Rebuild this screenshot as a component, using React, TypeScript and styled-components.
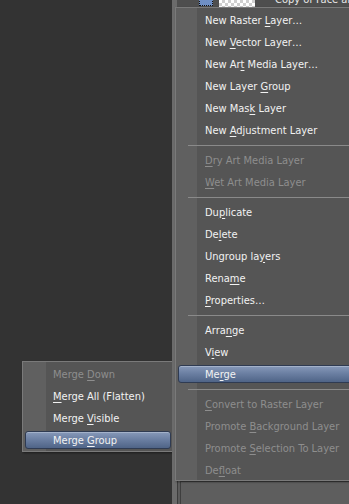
import React from 'react';
import styled, { createGlobalStyle } from 'styled-components';

const GlobalStyle = createGlobalStyle`
  html, body {
    margin: 0;
    padding: 0;
    background: #333333;
    overflow: hidden;
  }
  body {
    font-family: "DejaVu Sans Condensed", "DejaVu Sans", Tahoma, sans-serif;
    font-size: 11px;
  }
`;

type Entry =
  | { kind: 'item'; label: string; key?: number; disabled?: boolean; active?: boolean }
  | { kind: 'sep' };

const mainMenu: Entry[] = [
  { kind: 'item', label: 'New Raster Layer…', key: 11 },
  { kind: 'item', label: 'New Vector Layer…', key: 4 },
  { kind: 'item', label: 'New Art Media Layer…', key: 6 },
  { kind: 'item', label: 'New Layer Group', key: 10 },
  { kind: 'item', label: 'New Mask Layer', key: 7 },
  { kind: 'item', label: 'New Adjustment Layer', key: 4 },
  { kind: 'sep' },
  { kind: 'item', label: 'Dry Art Media Layer', key: 0, disabled: true },
  { kind: 'item', label: 'Wet Art Media Layer', key: 0, disabled: true },
  { kind: 'sep' },
  { kind: 'item', label: 'Duplicate', key: 2 },
  { kind: 'item', label: 'Delete', key: 2 },
  { kind: 'item', label: 'Ungroup layers', key: 10 },
  { kind: 'item', label: 'Rename', key: 4 },
  { kind: 'item', label: 'Properties…', key: 0 },
  { kind: 'sep' },
  { kind: 'item', label: 'Arrange', key: 4 },
  { kind: 'item', label: 'View', key: 1 },
  { kind: 'item', label: 'Merge', key: 2, active: true },
  { kind: 'sep' },
  { kind: 'item', label: 'Convert to Raster Layer', key: 0, disabled: true },
  { kind: 'item', label: 'Promote Background Layer', key: 8, disabled: true },
  { kind: 'item', label: 'Promote Selection To Layer', key: 8, disabled: true },
  { kind: 'item', label: 'Defloat', key: 2, disabled: true },
];

const mergeMenu: Entry[] = [
  { kind: 'item', label: 'Merge Down', key: 6, disabled: true },
  { kind: 'item', label: 'Merge All (Flatten)', key: 0 },
  { kind: 'item', label: 'Merge Visible', key: 6 },
  { kind: 'item', label: 'Merge Group', key: 6, active: true },
];

const Screen = styled.div`
  display: flex;
  width: 349px;
  height: 504px;
  background: #333333;
  overflow: hidden;
`;

const Desk = styled.div`
  position: relative;
  width: 172px;
  flex-shrink: 0;
  background: #333333;
`;

const Panel = styled.div`
  position: relative;
  flex: 1;
  display: flex;
  flex-direction: column;
  background: #5b5b5b;
  border-left: 5px solid #6b6b6b;
  box-shadow: inset 1px 0 0 #3c3c3c;
`;

const LayerRow = styled.div`
  height: 8px;
  display: flex;
  align-items: flex-end;
  gap: 6px;
  padding-left: 22px;
  overflow: hidden;
  background: #4e4e4e;
`;

const LayerIcon = styled.div`
  width: 12px;
  height: 6px;
  margin-bottom: 2px;
  background: #6f8fc4;
  border: 1px dotted #111;
  border-top: none;
`;

const Thumb = styled.div`
  width: 36px;
  height: 8px;
  background-color: #ffffff;
  background-image: linear-gradient(45deg, #cfcfcf 25%, transparent 25%, transparent 75%, #cfcfcf 75%),
    linear-gradient(45deg, #cfcfcf 25%, transparent 25%, transparent 75%, #cfcfcf 75%);
  background-size: 6px 6px;
  background-position: 0 0, 3px 3px;
`;

const LayerName = styled.span`
  color: #e8e8e8;
  font-size: 11px;
  line-height: 11px;
  white-space: nowrap;
  margin-left: 14px;
  transform: translateY(-3px);
`;

const PanelBody = styled.div`
  flex: 1;
`;

const PanelFoot = styled.div`
  height: 22px;
  margin-left: 3px;
  border-left: 1px solid #3e3e3e;
  border-top: 1px solid #3e3e3e;
  background: #5e5e5e;
`;

const MenuBox = styled.div<{ $gutter: number }>`
  position: absolute;
  display: flex;
  flex-direction: column;
  background: linear-gradient(
    to right,
    #606060 0,
    #606060 ${(p) => p.$gutter}px,
    #555555 ${(p) => p.$gutter}px
  );
  border: 1px solid #7a7a7a;
  box-shadow: 1px 1px 2px rgba(0, 0, 0, 0.45);
  padding: 1px 0 0 0;
`;

const MainMenu = styled(MenuBox)`
  left: -2px;
  top: 7px;
  width: 210px;
  height: 474px;
  box-sizing: border-box;
`;

const SubMenu = styled(MenuBox)`
  left: 22px;
  top: 361px;
  width: 151px;
  height: 91px;
  box-sizing: border-box;
`;

const Item = styled.div<{ $disabled?: boolean; $active?: boolean; $indent: number }>`
  height: 22px;
  flex-shrink: 0;
  display: flex;
  align-items: center;
  padding-left: ${(p) => p.$indent}px;
  margin: 0 ${(p) => (p.$active ? 1 : 0)}px 0 ${(p) => (p.$active ? 2 : 0)}px;
  color: ${(p) => (p.$disabled ? '#8e8e8e' : '#f2f2f2')};
  white-space: nowrap;
  box-sizing: border-box;
  position: relative;
  ${(p) =>
    p.$active &&
    `
    &::before {
      content: '';
      position: absolute;
      left: 0;
      right: 0;
      top: 2px;
      bottom: 2px;
      border-radius: 3px;
      border: 1px solid #2f3b52;
      background: linear-gradient(to bottom, #8799b9 0%, #6c80a3 45%, #4f6487 100%);
      box-shadow: inset 0 1px 0 rgba(255,255,255,0.25);
    }
  `}
`;

const Label = styled.span`
  position: relative;
`;

const Key = styled.span`
  text-decoration: underline;
  text-underline-offset: 2px;
`;

const Separator = styled.div<{ $from: number }>`
  height: 8px;
  flex-shrink: 0;
  display: flex;
  align-items: center;
  padding-left: ${(p) => p.$from}px;
  &::after {
    content: '';
    flex: 1;
    height: 1px;
    background: #8a8a8a;
  }
`;

function renderLabel(label: string, key?: number) {
  if (key === undefined) return label;
  return (
    <>
      {label.slice(0, key)}
      <Key>{label[key]}</Key>
      {label.slice(key + 1)}
    </>
  );
}

const MenuItems: React.FC<{ entries: Entry[]; indent: number; sepFrom: number; activeIndent: number }> = ({
  entries,
  indent,
  sepFrom,
  activeIndent,
}) => (
  <>
    {entries.map((e, i) =>
      e.kind === 'sep' ? (
        <Separator key={i} $from={sepFrom} />
      ) : (
        <Item key={i} $disabled={e.disabled} $active={e.active} $indent={e.active ? activeIndent : indent}>
          <Label>{renderLabel(e.label, e.key)}</Label>
        </Item>
      )
    )}
  </>
);

export default function App() {
  return (
    <>
      <GlobalStyle />
      <Screen>
        <Desk>
          <SubMenu $gutter={23}>
            <MenuItems entries={mergeMenu} indent={30} sepFrom={10} activeIndent={28} />
          </SubMenu>
        </Desk>
        <Panel>
          <LayerRow>
            <LayerIcon />
            <Thumb />
            <LayerName>Copy of Face and c</LayerName>
          </LayerRow>
          <PanelBody />
          <PanelFoot />
          <MainMenu $gutter={21}>
            <MenuItems entries={mainMenu} indent={29} sepFrom={12} activeIndent={27} />
          </MainMenu>
        </Panel>
      </Screen>
    </>
  );
}
